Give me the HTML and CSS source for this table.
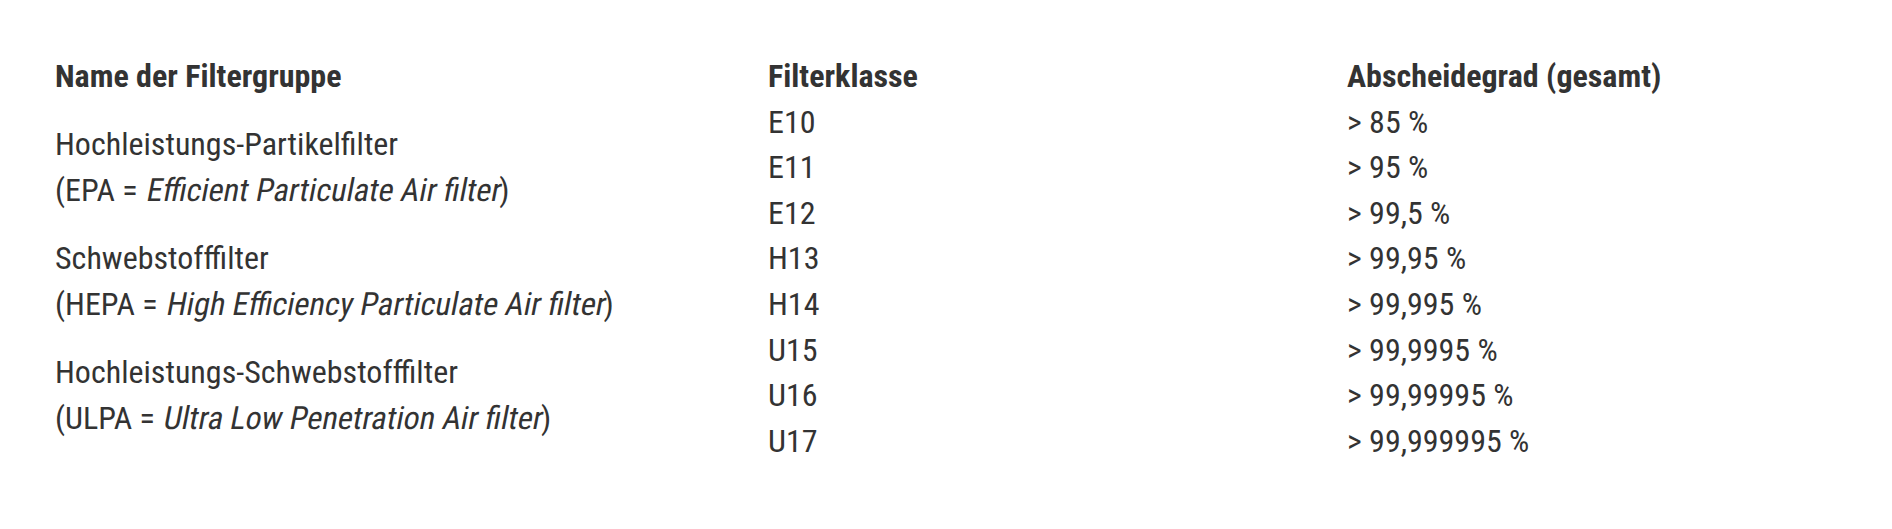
FILE: index.html
```html
<!DOCTYPE html>
<html lang="de">
<head>
<meta charset="utf-8">
<link rel="stylesheet" href="styles.css">
</head>
<body>
<div class="wrap">
<table class="filter-table">
  <colgroup>
    <col class="col-name">
    <col class="col-class">
    <col class="col-rate">
  </colgroup>
  <thead>
    <tr>
      <th>Name der Filtergruppe</th>
      <th>Filterklasse</th>
      <th>Abscheidegrad (gesamt)</th>
    </tr>
  </thead>
  <tbody>
    <tr>
      <td rowspan="3" class="group">Hochleistungs-Partikelfilter<br>(EPA = <em>Efficient Particulate Air filter</em>)</td>
      <td>E10</td>
      <td>&gt; 85 %</td>
    </tr>
    <tr><td>E11</td><td>&gt; 95 %</td></tr>
    <tr><td>E12</td><td>&gt; 99,5 %</td></tr>
    <tr>
      <td rowspan="2" class="group">Schwebstofffilter<br>(HEPA = <em>High Efficiency Particulate Air filter</em>)</td>
      <td>H13</td>
      <td>&gt; 99,95 %</td>
    </tr>
    <tr><td>H14</td><td>&gt; 99,995 %</td></tr>
    <tr>
      <td rowspan="3" class="group">Hochleistungs-Schwebstofffilter<br>(ULPA = <em>Ultra Low Penetration Air filter</em>)</td>
      <td>U15</td>
      <td>&gt; 99,9995 %</td>
    </tr>
    <tr><td>U16</td><td>&gt; 99,99995 %</td></tr>
    <tr><td>U17</td><td>&gt; 99,999995 %</td></tr>
  </tbody>
</table>
</div>
</body>
</html>
```
FILE: styles.css
```css
html, body {
  margin: 0;
  background: #fff;
}
body {
  font-family: "Roboto Condensed", Roboto, "Liberation Sans", sans-serif;
  color: #333;
}
.wrap {
  padding: 54px 55px 0 55px;
}
.filter-table {
  border-collapse: collapse;
  table-layout: fixed;
  width: 1782px;
  font-size: 32px;
  line-height: 45.6px;
}
.col-name { width: 713px; }
.col-class { width: 579px; }
.col-rate { width: auto; }
.filter-table th,
.filter-table td {
  padding: 0;
  text-align: left;
  vertical-align: middle;
}
.filter-table th {
  font-weight: 700;
}
.filter-table em {
  font-style: normal;
  display: inline-block;
  transform: skewX(-11deg);
  transform-origin: 0 75%;
}
```
